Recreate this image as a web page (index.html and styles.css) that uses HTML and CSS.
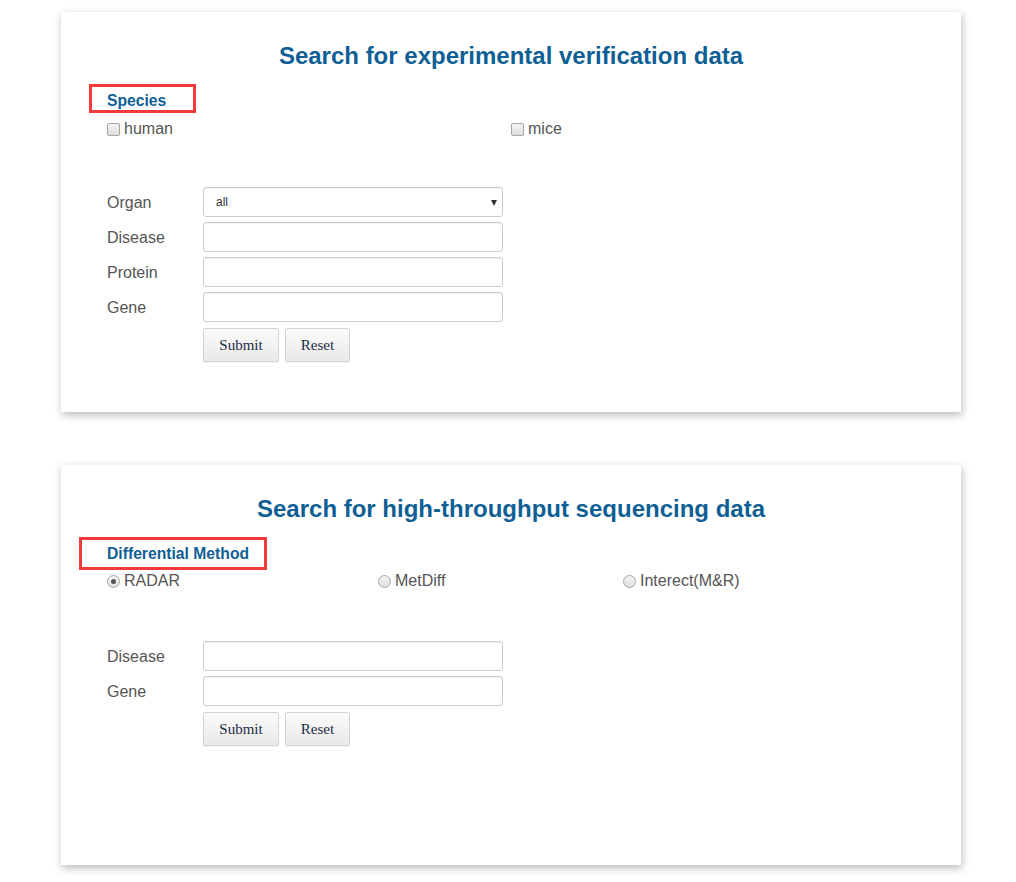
FILE: index.html
```html
<!DOCTYPE html>
<html>
<head>
<meta charset="utf-8">
<link rel="stylesheet" href="styles.css">
</head>
<body>
<section class="card card-first">
  <h2 class="card-title">Search for experimental verification data</h2>
  <div class="legend-wrap legend-wrap-species">
    <span class="legend legend-species">Species</span>
  </div>
  <div class="choices choices-species">
    <label class="choice"><input type="checkbox" class="box"> human</label>
    <label class="choice"><input type="checkbox" class="box"> mice</label>
  </div>
  <form class="form form-first">
    <div class="row">
      <span class="row-label">Organ</span>
      <div class="select-wrap">
        <select class="field select"><option>all</option></select>
      </div>
    </div>
    <div class="row">
      <span class="row-label">Disease</span>
      <input class="field" type="text">
    </div>
    <div class="row">
      <span class="row-label">Protein</span>
      <input class="field" type="text">
    </div>
    <div class="row">
      <span class="row-label">Gene</span>
      <input class="field" type="text">
    </div>
    <div class="row">
      <span class="row-label"></span>
      <div class="buttons">
        <button type="button" class="btn btn-submit">Submit</button>
        <button type="button" class="btn btn-reset">Reset</button>
      </div>
    </div>
  </form>
</section>

<section class="card card-second">
  <h2 class="card-title">Search for high-throughput sequencing data</h2>
  <div class="legend-wrap legend-wrap-method">
    <span class="legend legend-method">Differential Method</span>
  </div>
  <div class="choices choices-method">
    <label class="choice"><input type="radio" name="m" class="radio" checked> RADAR</label>
    <label class="choice"><input type="radio" name="m" class="radio"> MetDiff</label>
    <label class="choice"><input type="radio" name="m" class="radio"> Interect(M&amp;R)</label>
  </div>
  <form class="form form-second">
    <div class="row">
      <span class="row-label">Disease</span>
      <input class="field" type="text">
    </div>
    <div class="row">
      <span class="row-label">Gene</span>
      <input class="field" type="text">
    </div>
    <div class="row">
      <span class="row-label"></span>
      <div class="buttons">
        <button type="button" class="btn btn-submit">Submit</button>
        <button type="button" class="btn btn-reset">Reset</button>
      </div>
    </div>
  </form>
</section>
</body>
</html>
```

FILE: styles.css
```css
html, body {
  margin: 0;
  padding: 0;
  background: #fff;
}
body {
  font-family: "Liberation Sans", Arial, sans-serif;
  color: #555;
  padding-top: 12px;
  padding-bottom: 17px;
}
.card {
  width: 900px;
  height: 400px;
  margin-left: 61px;
  background: #fff;
  box-sizing: border-box;
  padding-top: 30px;
  box-shadow: 1px 3px 8px rgba(0, 0, 0, 0.28);
}
.card-second {
  margin-top: 53px;
}
.card-title {
  margin: 0;
  text-align: center;
  font-size: 24px;
  line-height: 28px;
  font-weight: bold;
  color: #0f5f95;
}
.legend-wrap {
  display: flex;
  margin-top: 14px;
}
.legend {
  display: inline-block;
  font-weight: bold;
  font-size: 15.7px;
  color: #0f5f95;
  border: 3px solid #f23a3a;
  line-height: 19px;
}
.legend-wrap-species {
  margin-left: 28px;
}
.legend-species {
  padding: 4px 27px 0 15px;
}
.legend-wrap-method {
  margin-left: 18px;
}
.legend-method {
  padding: 4px 15px 4px 25px;
}
.choices {
  display: grid;
  margin-left: 46px;
  font-size: 16px;
  line-height: 20px;
}
.choices-species {
  margin-top: 6px;
  grid-template-columns: 404px auto;
}
.choices-method {
  margin-top: 1px;
  grid-template-columns: 271px 245px auto;
}
.choice {
  display: flex;
  align-items: center;
  gap: 4px;
  color: #555;
}
.box, .radio {
  appearance: none;
  -webkit-appearance: none;
  margin: 0;
  width: 13px;
  height: 13px;
  border: 1px solid #a6a6a6;
  background: linear-gradient(#f4f4f4, #dedede);
  box-sizing: border-box;
  flex: none;
}
.box {
  border-radius: 2px;
}
.radio {
  border-radius: 50%;
  position: relative;
}
.radio:checked::after {
  content: "";
  position: absolute;
  left: 3px;
  top: 3px;
  width: 5px;
  height: 5px;
  border-radius: 50%;
  background: #555;
}
.form {
  margin-left: 46px;
  display: flex;
  flex-direction: column;
  gap: 5px;
}
.form-first {
  margin-top: 48px;
}
.form-second {
  margin-top: 50px;
}
.row {
  display: flex;
  align-items: center;
}
.row-label {
  width: 96px;
  font-size: 16px;
  padding-top: 2px;
  color: #555;
}
.field {
  width: 300px;
  height: 30px;
  box-sizing: border-box;
  border: 1px solid #ccc;
  border-radius: 3px;
  margin: 0;
  background: #fff;
  box-shadow: inset 0 1px 1px rgba(0, 0, 0, 0.06);
  font-family: "Liberation Sans", Arial, sans-serif;
}
.select-wrap {
  position: relative;
}
.select {
  appearance: none;
  -webkit-appearance: none;
  display: block;
  padding-left: 12px;
  font-size: 12px;
  color: #333;
}
.select-wrap::after {
  content: "";
  position: absolute;
  right: 6px;
  top: 13px;
  border-left: 3.5px solid transparent;
  border-right: 3.5px solid transparent;
  border-top: 6px solid #333;
}
.buttons {
  display: flex;
  gap: 6px;
  padding-top: 1px;
}
.btn {
  height: 34px;
  margin: 0;
  border: 1px solid #d4d4d4;
  border-radius: 2px;
  background: linear-gradient(#fbfbfb, #e9e9e9);
  font-family: "Liberation Serif", "Times New Roman", serif;
  font-size: 15px;
  color: #1d2c45;
  box-shadow: 0 1px 1px rgba(0, 0, 0, 0.05);
}
.btn-submit {
  width: 76px;
}
.btn-reset {
  width: 65px;
}
```
